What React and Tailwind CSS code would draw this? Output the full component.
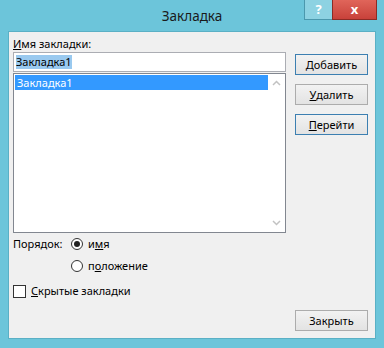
import React from "react";

const font = { fontFamily: '"Noto Sans", "Liberation Sans", sans-serif' };

function Btn({ children, focused = false }) {
  return (
    <button
      className={
        "w-[73px] h-[21px] text-[11px] leading-none text-black flex items-center justify-center bg-gradient-to-b from-[#f2f2f2] to-[#e3e3e3] border " +
        (focused ? "border-[#3c7fb1]" : "border-[#acacac]")
      }
    >
      {children}
    </button>
  );
}

function Radio({ checked, children }) {
  return (
    <div className="flex items-center gap-[5px] h-[22px]">
      <span className="w-[12px] h-[12px] rounded-full border border-[#333] bg-white flex items-center justify-center">
        {checked && <span className="w-[6px] h-[6px] rounded-full bg-[#222]" />}
      </span>
      <span>{children}</span>
    </div>
  );
}

export default function App() {
  return (
    <div
      className="w-[384px] h-[348px] bg-[#6cc5da] flex flex-col text-[11px] text-black"
      style={font}
    >
      <div className="relative h-[31px] flex items-center justify-center">
        <span className="text-[13.5px] text-[#1a1a1a] pt-[1px]">Закладка</span>
        <div className="absolute top-0 right-[7px] flex">
          <div className="w-[28px] h-[20px] bg-[#8dd2e2] border-l border-b border-[#4b98ad] flex items-center justify-center text-white font-bold text-[13px]">
            ?
          </div>
          <div className="w-[45px] h-[20px] bg-gradient-to-b from-[#e0655a] to-[#c8413a] border border-t-0 border-[#8c2b25] flex items-center justify-center text-white font-bold text-[13px]">
            x
          </div>
        </div>
      </div>

      <div className="flex-1 mx-[8px] mb-[9px] bg-[#f0f0f0] border border-[#5ab0c5] flex pl-[4px] pr-[7px]">
        <div className="w-[273px] flex flex-col">
          <div className="mt-[4px] h-[16px] leading-[16px]">
            <span className="underline">И</span>мя закладки:
          </div>
          <div className="h-[20px] bg-white border border-[#abadb3] flex items-center px-[2px]">
            <span className="bg-[#99c9ef] leading-[14px]">Закладка1</span>
          </div>
          <div className="mt-[1px] h-[160px] bg-white border border-[#828790] flex">
            <div className="flex-1 pt-[1px] pl-[1px]">
              <div className="h-[15px] bg-[#3399ff] text-white leading-[15px] pl-[2px]">Закладка1</div>
            </div>
            <div className="w-[17px] flex flex-col items-center justify-between py-[6px] text-[#c2c2c2]">
              <svg width="9" height="6" viewBox="0 0 9 6" fill="none" stroke="currentColor" strokeWidth="1.5">
                <path d="M1 5 L4.5 1.5 L8 5" />
              </svg>
              <svg width="9" height="6" viewBox="0 0 9 6" fill="none" stroke="currentColor" strokeWidth="1.5">
                <path d="M1 1 L4.5 4.5 L8 1" />
              </svg>
            </div>
          </div>
          <div className="flex">
            <div className="w-[58px] h-[22px] leading-[22px]">Порядок:</div>
            <div className="flex flex-col">
              <Radio checked>
                и<span className="underline">м</span>я
              </Radio>
              <Radio>
                п<span className="underline">о</span>ложение
              </Radio>
            </div>
          </div>
          <div className="mt-[6px] h-[16px] flex items-center gap-[5px]">
            <span className="w-[13px] h-[13px] border border-[#333] bg-white" />
            <span>
              <span className="underline">С</span>крытые закладки
            </span>
          </div>
        </div>
        <div className="flex-1 flex flex-col items-end">
          <div className="mt-[22px] flex flex-col gap-[9px]">
            <Btn focused>
              <span className="underline">Д</span>обавить
            </Btn>
            <Btn>
              <span className="underline">У</span>далить
            </Btn>
            <Btn focused>
              <span className="underline">П</span>ерейти
            </Btn>
          </div>
          <div className="mt-auto mb-[7px]">
            <Btn>Закрыть</Btn>
          </div>
        </div>
      </div>
    </div>
  );
}
